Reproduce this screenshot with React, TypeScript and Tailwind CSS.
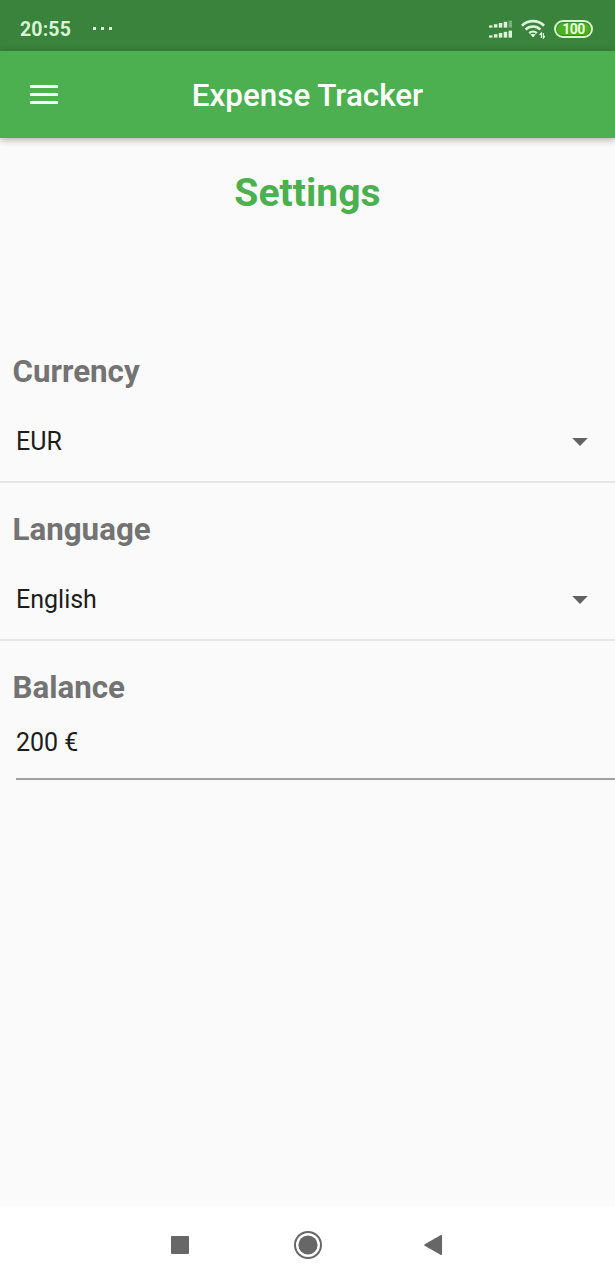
import React from "react";

function StatusIcons() {
  const bars = [0, 1, 2, 3, 4];
  return (
    <div className="flex items-center">
      <svg className="mr-[9px] h-[20px] w-[24px]" viewBox="0 0 24 20" fill="#dcf5da">
        {bars.map((i) => (
          <rect key={`a${i}`} x={1 + i * 4.9} y={6.4 - i * 1.2} width="3.5" height={2.2 + i * 1.2} opacity={i === 4 ? 0.4 : 1} />
        ))}
        {bars.map((i) => (
          <rect key={`b${i}`} x={1 + i * 4.9} y={16.4 - i * 1.2} width="3.5" height={2.2 + i * 1.2} />
        ))}
      </svg>
      <svg className="mr-[9px] h-[20px] w-[24px]" viewBox="0 0 24 20" fill="none" stroke="#dcf5da" strokeWidth="2.7">
        <path d="M0.9 6.7A15.8 15.8 0 0 1 23.1 6.7" />
        <path d="M4.6 10.6A10.4 10.4 0 0 1 19.4 10.6" />
        <path d="M8.2 14.1A5.5 5.5 0 0 1 15.8 14.1" strokeWidth="2.4" />
        <path d="M9.4 15.4Q12 14 14.6 15.4L12 18.4Z" fill="#dcf5da" stroke="none" />
        <path d="M20.4 19V14L18.6 16M22.3 14V19L24 17" strokeWidth="1.2" />
      </svg>
      <div className="flex h-[18px] w-[39px] items-center justify-center rounded-full border-2 border-[#d6f6c6] p-[1px]">
        <div className="flex h-full w-full items-center justify-center rounded-full bg-[#4caf20]">
          <span className="text-[14px] leading-none font-bold tracking-[-0.6px] text-[#e6ffdc]">100</span>
        </div>
      </div>
    </div>
  );
}

function Heading({ children }: { children: React.ReactNode }) {
  return <h2 className="pl-[12.5px] text-[31.3px] leading-[38px] font-bold text-[#737373]">{children}</h2>;
}

function SelectRow({ label, value }: { label: string; value: string }) {
  return (
    <section className="h-[158px]">
      <Heading>{label}</Heading>
      <button className="mt-[16px] flex h-[76px] w-full items-center justify-between border-b-2 border-[#e6e6e6] pr-[27px] pb-[4px] pl-[16px] text-left text-[25px] text-[#1c1c1c]">
        <span>{value}</span>
        <svg className="h-[8px] w-[16px]" viewBox="0 0 16 8" fill="#626262">
          <path d="M0.2 0H15.8L8 8Z" />
        </svg>
      </button>
    </section>
  );
}

export default function App() {
  return (
    <div className="flex h-[1280px] w-[615px] flex-col overflow-hidden bg-[#fafafa] font-['Roboto',sans-serif]">
      <div className="flex h-[51px] shrink-0 items-center bg-[#3a833c] pt-[7px] pr-[22px] pl-[20px]">
        <span className="pt-[2px] text-[19.5px] leading-[22px] font-bold tracking-[0.15px] text-[#d9f5d6]">20:55</span>
        <div className="ml-[22px] flex gap-[5px] pb-[1px]">
          <i className="h-[3px] w-[3px] bg-[#d9f5d6]" />
          <i className="h-[3px] w-[3px] bg-[#d9f5d6]" />
          <i className="h-[3px] w-[3px] bg-[#d9f5d6]" />
        </div>
        <div className="ml-auto">
          <StatusIcons />
        </div>
      </div>
      <header className="grid h-[87px] shrink-0 grid-cols-[87px_1fr_87px] items-center bg-[#4caf50] shadow-[0_2px_7px_rgba(0,0,0,0.3)]">
        <svg className="ml-[30px] h-[20px] w-[28px]" viewBox="0 0 28 20" fill="#fff">
          <path d="M0 0h28v3H0zM0 8h28v3H0zM0 16h28v3H0z" />
        </svg>
        <h1 className="pt-[2px] text-center text-[31.4px] leading-[38px] font-medium text-white">Expense Tracker</h1>
      </header>
      <main className="flex-1">
        <h2 className="mt-[32px] text-center text-[39.1px] leading-[46px] font-bold text-[#4caf50]">Settings</h2>
        <div className="mt-[137px]">
          <SelectRow label="Currency" value="EUR" />
          <SelectRow label="Language" value="English" />
          <section>
            <Heading>Balance</Heading>
            <div className="ml-[15.5px] flex h-[73px] items-center border-b-2 border-[#a0a0a0] pt-[1px] pl-[0.5px] text-[25px] text-[#1c1c1c]">200 €</div>
          </section>
        </div>
      </main>
      <nav className="flex h-[74px] shrink-0 items-center bg-white pt-[4px] pl-[171px]">
        <i className="h-[18px] w-[18px] rounded-[1px] bg-[#676767]" />
        <svg className="ml-[105px] h-[28px] w-[28px]" viewBox="0 0 28 28">
          <circle cx="14" cy="14" r="13" fill="none" stroke="#676767" strokeWidth="2" />
          <circle cx="14" cy="14" r="9.6" fill="#676767" />
        </svg>
        <svg className="ml-[101px] h-[22px] w-[20px]" viewBox="0 0 20 22" fill="#676767" stroke="#676767" strokeWidth="1.5" strokeLinejoin="round">
          <path d="M2 11L18.3 1.7V20.3Z" />
        </svg>
      </nav>
    </div>
  );
}
